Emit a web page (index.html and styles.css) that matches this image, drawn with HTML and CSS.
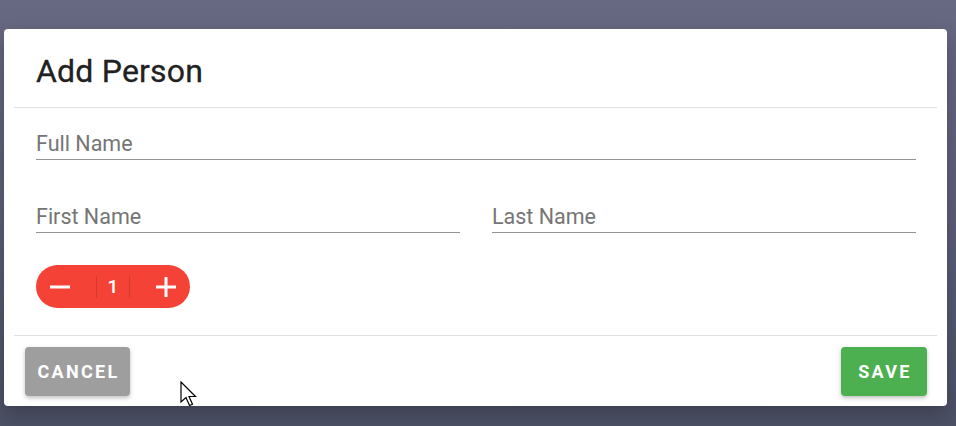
FILE: index.html
```html
<!DOCTYPE html>
<html>
<head>
<meta charset="utf-8">
<link rel="stylesheet" href="styles.css">
</head>
<body>
<div class="dialog">
  <div class="header"><h1 class="title">Add Person</h1></div>
  <div class="divider"></div>
  <div class="content">
    <div class="field full"><span class="label">Full Name</span></div>
    <div class="row">
      <div class="field"><span class="label">First Name</span></div>
      <div class="field"><span class="label">Last Name</span></div>
    </div>
    <div class="stepper">
      <span class="step-btn">
        <svg width="20" height="20" viewBox="0 0 20 20"><rect x="0" y="8.5" width="20" height="3" fill="#fff"/></svg>
      </span>
      <span class="step-value">1</span>
      <span class="step-btn">
        <svg width="20" height="20" viewBox="0 0 20 20"><rect x="0" y="8.5" width="20" height="3" fill="#fff"/><rect x="8.5" y="0" width="3" height="20" fill="#fff"/></svg>
      </span>
    </div>
  </div>
  <div class="divider"></div>
  <div class="footer">
    <button class="btn cancel">CANCEL</button>
    <button class="btn save">SAVE</button>
  </div>
</div>
<svg class="cursor" width="20" height="28" viewBox="0 0 20 28"><path d="M1 1 L1 21 L6 16.5 L9.5 24.5 L12.5 23.2 L9 15.5 L15.5 15.5 Z" fill="#fff" stroke="#000" stroke-width="1.2" stroke-linejoin="miter"/></svg>
</body>
</html>
```
FILE: styles.css
```css
html, body {
  margin: 0;
  height: 100%;
}
body {
  background: linear-gradient(180deg, #676982 0%, #5c5f78 50%, #4d5166 100%);
  font-family: Roboto, "Noto Sans", sans-serif;
  overflow: hidden;
  position: relative;
}
.dialog {
  margin: 29px 0 0 4px;
  width: 943px;
  height: 377px;
  background: #fff;
  border-radius: 4px;
  display: flex;
  flex-direction: column;
  box-shadow: 0 8px 20px rgba(0,0,0,0.25);
}
.header {
  height: 78px;
  padding: 0 32px;
  display: flex;
  align-items: center;
}
.title {
  margin: 5px 0 0 0;
  font-size: 32px;
  font-weight: 400;
  color: #212121;
  letter-spacing: 0.2px;
  -webkit-text-stroke: 0.3px #212121;
}
.divider {
  height: 1px;
  background: #e0e0e0;
  margin: 0 10px;
}
.content {
  flex: 1;
  padding: 23px 31px 0 32px;
  display: flex;
  flex-direction: column;
}
.field {
  border-bottom: 1px solid #949494;
  height: 29px;
  display: flex;
  align-items: flex-end;
  padding-bottom: 3px;
  box-sizing: border-box;
}
.label {
  font-size: 21.5px;
  color: #757575;
  line-height: 24px;
}
.row {
  display: grid;
  grid-template-columns: 1fr 1fr;
  column-gap: 32px;
  margin-top: 44px;
}
.stepper {
  margin-top: 32px;
  width: 154px;
  height: 43px;
  border-radius: 22px;
  background: #f44336;
  display: flex;
  align-items: center;
  justify-content: space-between;
  padding: 0 14px;
  box-sizing: border-box;
}
.step-btn {
  display: flex;
  width: 20px;
  justify-content: center;
}
.step-value {
  color: #fff;
  font-size: 19px;
  font-weight: 500;
  width: 32px;
  text-align: center;
  border-left: 1px solid #d33a2e;
  border-right: 1px solid #d33a2e;
  line-height: 22px;
}
.footer {
  height: 70px;
  display: flex;
  justify-content: space-between;
  align-items: flex-start;
  padding: 11px 20px 0 21px;
  box-sizing: border-box;
}
.btn {
  height: 49px;
  border: none;
  border-radius: 4px;
  color: #fff;
  font-family: Roboto, "Noto Sans", sans-serif;
  font-size: 18px;
  font-weight: 700;
  letter-spacing: 2.3px;
  padding: 0;
  text-indent: 2px;
  box-shadow: 0 2px 4px rgba(0,0,0,0.25);
}
.cancel {
  background: #9e9e9e;
  width: 105px;
}
.save {
  background: #4caf50;
  width: 86px;
}
.cursor {
  position: absolute;
  left: 180px;
  top: 381px;
}
```
